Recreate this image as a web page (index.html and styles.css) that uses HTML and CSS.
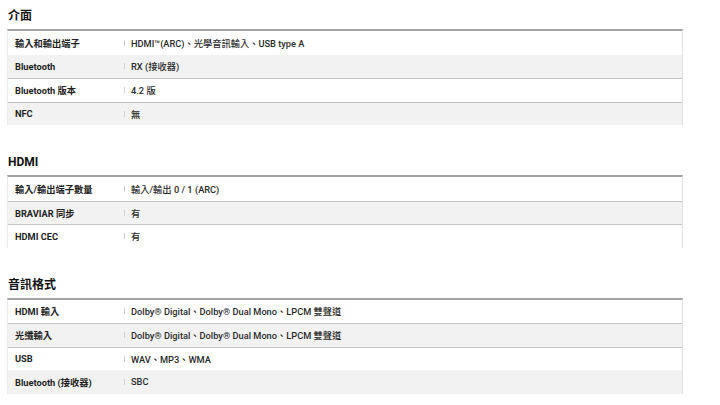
FILE: index.html
```html
<!DOCTYPE html>
<html lang="zh-Hant">
<head>
<meta charset="utf-8">
<title>規格</title>
<link rel="stylesheet" href="styles.css">
</head>
<body>
<section class="spec">
  <h2 class="spec-title">介面</h2>
  <div class="spec-table">
    <div class="row"><div class="label">輸入和輸出端子</div><div class="value">HDMI™(ARC)、光學音訊輸入、USB type A</div></div>
    <div class="row"><div class="label">Bluetooth</div><div class="value">RX (接收器)</div></div>
    <div class="row ruled"><div class="label">Bluetooth 版本</div><div class="value">4.2 版</div></div>
    <div class="row ruled"><div class="label">NFC</div><div class="value">無</div></div>
  </div>
</section>
<section class="spec">
  <h2 class="spec-title">HDMI</h2>
  <div class="spec-table">
    <div class="row"><div class="label">輸入/輸出端子數量</div><div class="value">輸入/輸出 0 / 1 (ARC)</div></div>
    <div class="row ruled"><div class="label">BRAVIAR 同步</div><div class="value">有</div></div>
    <div class="row ruled"><div class="label">HDMI CEC</div><div class="value">有</div></div>
  </div>
</section>
<section class="spec">
  <h2 class="spec-title">音訊格式</h2>
  <div class="spec-table">
    <div class="row"><div class="label">HDMI 輸入</div><div class="value">Dolby® Digital、Dolby® Dual Mono、LPCM 雙聲道</div></div>
    <div class="row ruled"><div class="label">光纖輸入</div><div class="value">Dolby® Digital、Dolby® Dual Mono、LPCM 雙聲道</div></div>
    <div class="row ruled"><div class="label">USB</div><div class="value">WAV、MP3、WMA</div></div>
    <div class="row"><div class="label">Bluetooth (接收器)</div><div class="value">SBC</div></div>
  </div>
</section>
</body>
</html>
```
FILE: styles.css
```css
html, body {
  margin: 0;
  padding: 0;
  background: #ffffff;
}
body {
  padding: 8px 37px 0 7px;
  font-family: Roboto, "Noto Sans CJK TC", sans-serif;
  color: #222222;
}
.spec {
  margin-bottom: 29px;
}
.spec-title {
  margin: 0 0 5px 1px;
  font-size: 12px;
  line-height: 16px;
  font-weight: 700;
  color: #111111;
}
.spec-table {
  border-top: 2px solid #a3a3a3;
  border-left: 1px solid #ececec;
  border-right: 1px solid #e2e2e2;
}
.row {
  display: grid;
  grid-template-columns: 116px 1fr;
  align-items: center;
  height: 23.5px;
  box-sizing: border-box;
  font-size: 9.25px;
  background: #ffffff;
}
.row:nth-child(even) {
  background: #f2f2f2;
}
.row.ruled {
  border-top: 1px solid #c4c4c4;
}
.label {
  padding-left: 7px;
  font-weight: 700;
  color: #1e1e1e;
}
.value {
  position: relative;
  padding-left: 7px;
  font-weight: 500;
  color: #2a2a2a;
}
.value::before {
  content: "";
  position: absolute;
  left: 0;
  top: 50%;
  width: 1px;
  height: 6px;
  margin-top: -3px;
  background: #cfcfcf;
}
```
